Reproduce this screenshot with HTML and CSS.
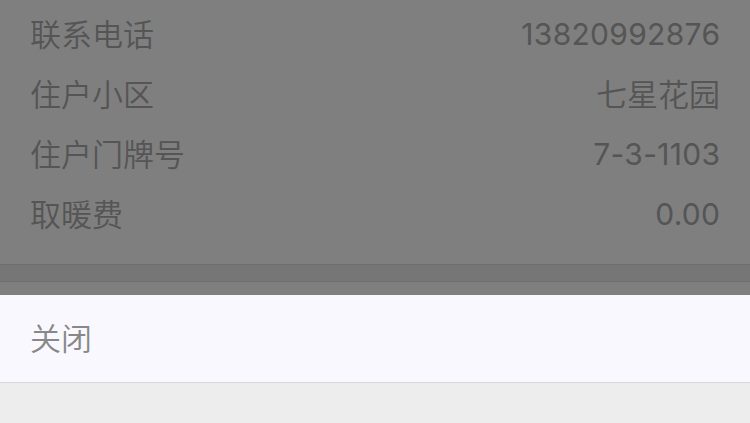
FILE: index.html
```html
<!DOCTYPE html>
<html lang="zh-CN">
<head>
<meta charset="utf-8">
<title>详情</title>
<link rel="stylesheet" href="styles.css">
</head>
<body>
<div class="page">
  <ul class="info-list">
    <li class="row"><span class="label">联系电话</span><span class="value num">13820992876</span></li>
    <li class="row"><span class="label">住户小区</span><span class="value">七星花园</span></li>
    <li class="row"><span class="label">住户门牌号</span><span class="value num">7-3-1103</span></li>
    <li class="row"><span class="label">取暖费</span><span class="value num">0.00</span></li>
  </ul>
  <div class="divider-band"></div>
</div>
<div class="mask"></div>
<div class="sheet">
  <div class="sheet-item">关闭</div>
  <div class="sheet-foot"></div>
</div>
</body>
</html>
```

FILE: styles.css
```css
html, body {
  margin: 0;
  padding: 0;
  height: 100%;
}
body {
  background: #ffffff;
  font-family: "Noto Sans CJK SC", "Noto Sans", sans-serif;
  overflow: hidden;
}
.page {
  padding-top: 2px;
}
.info-list {
  list-style: none;
  margin: 0;
  padding: 0;
}
.row {
  height: 60px;
  display: flex;
  align-items: center;
  justify-content: space-between;
  padding: 0 30px 0 30px;
  font-size: 31px;
  font-weight: 350;
  color: #aaaaaa;
}
.num {
  font-family: "Inter", "Noto Sans", sans-serif;
  font-size: 30px;
  font-weight: 370;
  letter-spacing: 0.3px;
  margin-right: -0.3px;
  padding-top: 3px;
}
.divider-band {
  margin-top: 22px;
  height: 16px;
  background: #ececec;
  border-top: 1px solid #dcdcdc;
  border-bottom: 1px solid #dcdcdc;
}
.mask {
  position: fixed;
  inset: 0;
  background: rgba(0, 0, 0, 0.5);
}
.sheet {
  position: fixed;
  left: 0;
  right: 0;
  bottom: 0;
  background: #ededed;
}
.sheet-item {
  height: 88px;
  display: flex;
  align-items: center;
  padding-left: 30px;
  padding-bottom: 4px;
  box-sizing: border-box;
  font-size: 31px;
  font-weight: 350;
  color: #888888;
  background: #f9f8fe;
  border-bottom: 1px solid #d9d9d9;
}
.sheet-foot {
  height: 40px;
}
```
